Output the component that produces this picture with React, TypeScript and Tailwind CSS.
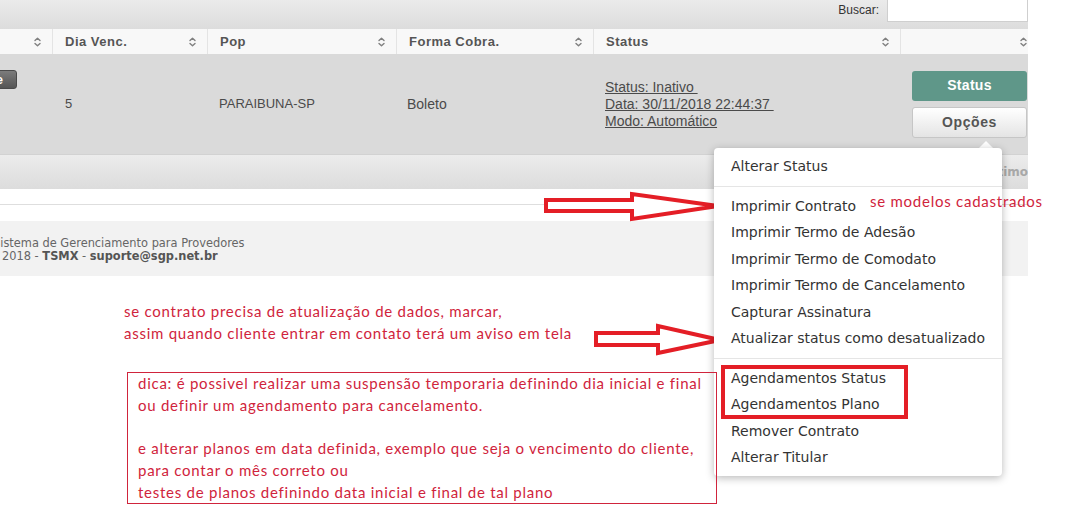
import React from "react";

const SortIcon = () => (
  <svg width="7" height="10" viewBox="0 0 7 10" fill="none" stroke="#808080" strokeWidth="1.4" strokeLinecap="round" strokeLinejoin="round" className="shrink-0">
    <path d="M1 3.6 L3.5 1.2 L6 3.6" />
    <path d="M1 6.4 L3.5 8.8 L6 6.4" />
  </svg>
);

const cols = ["w-[53px]", "w-[155px]", "w-[189px]", "w-[197px]", "w-[307px]", "w-[137px]"];

const menuItems: (string | null)[] = [
  "Alterar Status",
  null,
  "Imprimir Contrato",
  "Imprimir Termo de Adesão",
  "Imprimir Termo de Comodato",
  "Imprimir Termo de Cancelamento",
  "Capturar Assinatura",
  "Atualizar status como desatualizado",
  null,
  "Agendamentos Status",
  "Agendamentos Plano",
  "Remover Contrato",
  "Alterar Titular",
];

const note = "font-['Lato','Open_Sans',sans-serif] text-[15px] tracking-[0.75px] text-[#d0243c]";

export default function App() {
  return (
    <div className="relative w-[1073px] h-[516px] overflow-hidden bg-white font-['Liberation_Sans',Arial,sans-serif]">
      <div className="w-[1028px] overflow-hidden">
        {/* toolbar */}
        <div className="h-[29px] bg-gradient-to-b from-[#ebebeb] to-[#dcdcdc] flex justify-end items-start">
          <span className="mt-[3px] mr-[8px] text-[12px] leading-[14px] text-[#333]">Buscar:</span>
          <div className="mt-[-3px] w-[141px] h-[25px] shrink-0 bg-white border border-[#cfcfcf]" />
        </div>

        {/* header */}
        <div className="h-[25px] flex bg-[#f8f8f8] text-[13px] font-bold tracking-[0.5px] text-[#555]">
          {["", "Dia Venc.", "Pop", "Forma Cobra.", "Status", ""].map((t, i) => (
            <div
              key={i}
              className={`${cols[i]} shrink-0 flex items-center justify-between pl-3 pr-[11px] ${i < 5 ? "border-r border-[#e4e4e4]" : ""}`}
            >
              <span>{t}</span>
              <SortIcon />
            </div>
          ))}
        </div>

        {/* row */}
        <div className="h-[100px] flex bg-[#dadada] text-[#4a4a4a]">
          <div className={`${cols[0]} shrink-0 flex justify-end items-start pt-[16px] pr-[36px]`}>
            <div className="shrink-0 h-[19px] pl-[7px] pr-[13px] flex items-center rounded-[3px] border border-[#4a4a4a] bg-gradient-to-b from-[#7c7c7c] to-[#555] text-white text-[13px] font-bold">
              Detalhe
            </div>
          </div>
          <div className={`${cols[1]} shrink-0 flex items-center pl-3 text-[13px]`}>5</div>
          <div className={`${cols[2]} shrink-0 flex items-center pl-[11px] text-[13px]`}>PARAIBUNA-SP</div>
          <div className={`${cols[3]} shrink-0 flex items-center pl-[10px] text-[14px]`}>Boleto</div>
          <div className={`${cols[4]} shrink-0 flex flex-col justify-center pl-[11px] text-[14px] leading-[17px] underline`}>
            <span>Status: Inativo&nbsp;</span>
            <span>Data: 30/11/2018 22:44:37&nbsp;</span>
            <span>Modo: Automático</span>
          </div>
          <div className={`${cols[5]} shrink-0 flex flex-col justify-center gap-[6px] pl-[11px]`}>
            <div className="w-[115px] h-[30px] flex items-center justify-center rounded-[3px] bg-[#5f9789] text-white text-[14px] font-bold tracking-[0.3px]">
              Status
            </div>
            <div className="w-[115px] h-[31px] flex items-center justify-center rounded-[3px] border border-[#c6c6c6] bg-gradient-to-b from-[#ffffff] to-[#e4e4e4] text-[#555] text-[14px] font-bold tracking-[0.6px]">
              Opções
            </div>
          </div>
        </div>

        {/* pagination strip */}
        <div className="h-[35px] flex items-center justify-end bg-gradient-to-b from-[#ececec] to-[#dcdcdc] border-t border-[#d2d2d2]">
          <span className="font-['DejaVu_Sans',Verdana,sans-serif] text-[12px] font-bold text-[#a8a8a8]">Último</span>
        </div>

        {/* white gap with line */}
        <div className="h-[16px] border-b border-[#dedede]" />
        <div className="h-[16px]" />

        {/* footer */}
        <div className="h-[55px] bg-[#f2f2f2] pt-[16px] font-['DejaVu_Sans',Verdana,sans-serif] text-[11.4px] leading-[13px] text-[#666]">
          <div className="ml-[-7px] whitespace-nowrap">Sistema de Gerenciamento para Provedores</div>
          <div className="ml-[-13px] whitespace-nowrap">
            © 2018 - <b className="text-[#555]">TSMX</b> - <b className="text-[#555]">suporte@sgp.net.br</b>
          </div>
        </div>
      </div>

      {/* arrows */}
      <svg className="absolute left-0 top-0 pointer-events-none" width="1073" height="516" viewBox="0 0 1073 516" fill="none">
        <polygon points="546,200 632,200 632,194 718,206 632,219 632,211 546,211" stroke="#e41e26" strokeWidth="4" strokeLinejoin="miter" fill="white" />
        <polygon points="596,333 658,333 658,326 720,340 658,353 658,345 596,345" stroke="#e41e26" strokeWidth="4" strokeLinejoin="miter" fill="white" />
      </svg>

      {/* dropdown menu */}
      <div className="absolute left-[979px] top-[141px] w-0 h-0 border-l-[7px] border-r-[7px] border-b-[7px] border-l-transparent border-r-transparent border-b-white" />
      <div className="absolute left-[714px] top-[148px] w-[288px] py-[5px] bg-white rounded-[4px] shadow-[0_2px_8px_rgba(0,0,0,0.28)] font-['DejaVu_Sans',Verdana,sans-serif] text-[14px] text-[#333]">
        {menuItems.map((m, i) =>
          m === null ? (
            <div key={i} className="h-px my-[6px] bg-[#e5e5e5]" />
          ) : (
            <div key={i} className="h-[26.5px] leading-[26.5px] pl-[17px] whitespace-nowrap">
              {m}
            </div>
          )
        )}
      </div>

      {/* red highlight box */}
      <div className="absolute left-[721px] top-[365px] w-[187px] h-[54px] border-4 border-[#e41e26]" />

      {/* annotations */}
      <div className={`absolute left-[870px] top-[191px] leading-[20px] whitespace-nowrap ${note}`}>se modelos cadastrados</div>
      <div className={`absolute left-[124px] top-[301px] leading-[21.5px] whitespace-nowrap ${note}`}>
        <div>se contrato precisa de atualização de dados, marcar,</div>
        <div>assim quando cliente entrar em contato terá um aviso em tela</div>
      </div>
      <div className={`absolute left-[127px] top-[372px] w-[590px] h-[132px] border border-[#d0243c] pl-[10px] leading-[21.7px] whitespace-nowrap ${note}`}>
        <div>dica: é possivel realizar uma suspensão temporaria definindo dia inicial e final</div>
        <div>ou definir um agendamento para cancelamento.</div>
        <div>&nbsp;</div>
        <div>e alterar planos em data definida, exemplo que seja o vencimento do cliente,</div>
        <div>para contar o mês correto ou</div>
        <div>testes de planos definindo data inicial e final de tal plano</div>
      </div>
    </div>
  );
}
